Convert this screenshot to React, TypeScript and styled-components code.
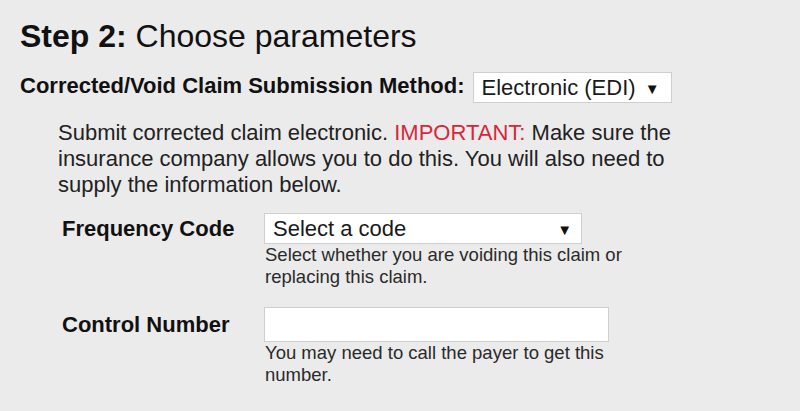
import React from "react";
import styled, { createGlobalStyle } from "styled-components";

const Global = createGlobalStyle`
  html, body { margin: 0; padding: 0; background: #ebebeb; }
  body { font-family: "Liberation Sans", Arial, sans-serif; color: #1a1a1a; }
`;

const Page = styled.div`
  width: 800px;
  height: 411px;
  box-sizing: border-box;
  padding: 18px 0 0 20px;
  background: #ebebeb;
  overflow: hidden;
`;

const Title = styled.h2`
  margin: 0;
  font-size: 32px;
  font-weight: normal;
  line-height: 36px;
  color: #111;
  b { font-weight: bold; }
`;

const MethodRow = styled.div`
  display: flex;
  align-items: center;
  gap: 8px;
  margin-top: 18px;
`;

const BoldLabel = styled.label`
  font-weight: bold;
  font-size: 22px;
  color: #111;
  padding-bottom: 3px;
`;

const SelectBox = styled.div<{ $width: number; $padRight: number }>`
  box-sizing: border-box;
  width: ${(p) => p.$width}px;
  height: 31px;
  background: #fff;
  border: 1px solid #cfcfcf;
  display: flex;
  align-items: center;
  justify-content: space-between;
  padding: 1px ${(p) => p.$padRight}px 0 8px;
  font-size: 22px;
  color: #1a1a1a;
`;

const Arrow = styled.span`
  font-size: 15px;
  line-height: 1;
  color: #111;
`;

const Indented = styled.div`
  padding-left: 38px;
  margin-top: 17px;
`;

const Para = styled.p`
  margin: 0;
  font-size: 22px;
  line-height: 26px;
  color: #222;
  width: 640px;
`;

const Important = styled.span`
  color: #d6283c;
`;

const FieldGrid = styled.div`
  display: grid;
  grid-template-columns: 202px auto;
  row-gap: 19px;
  margin-top: 15px;
  margin-left: 4px;
`;

const FieldLabel = styled.label<{ $top: number }>`
  font-weight: bold;
  font-size: 22px;
  color: #111;
  padding-top: ${(p) => p.$top}px;
`;

const FieldBody = styled.div`
  display: flex;
  flex-direction: column;
`;

const TextInput = styled.div`
  box-sizing: border-box;
  width: 345px;
  height: 35px;
  background: #fff;
  border: 1px solid #cfcfcf;
`;

const Help = styled.div<{ $width: number }>`
  font-size: 18.5px;
  line-height: 22px;
  color: #2a2a2a;
  width: ${(p) => p.$width}px;
  padding-left: 1px;
`;

export default function App() {
  return (
    <>
      <Global />
      <Page>
        <Title>
          <b>Step 2:</b> Choose parameters
        </Title>
        <MethodRow>
          <BoldLabel>Corrected/Void Claim Submission Method:</BoldLabel>
          <SelectBox $width={199} $padRight={11}>
            <span>Electronic (EDI)</span>
            <Arrow>▼</Arrow>
          </SelectBox>
        </MethodRow>
        <Indented>
          <Para>
            Submit corrected claim electronic. <Important>IMPORTANT:</Important> Make sure the
            insurance company allows you to do this. You will also need to supply the information
            below.
          </Para>
          <FieldGrid>
            <FieldLabel $top={3}>Frequency Code</FieldLabel>
            <FieldBody>
              <SelectBox $width={318} $padRight={9}>
                <span>Select a code</span>
                <Arrow>▼</Arrow>
              </SelectBox>
              <Help $width={372}>Select whether you are voiding this claim or replacing this claim.</Help>
            </FieldBody>
            <FieldLabel $top={5}>Control Number</FieldLabel>
            <FieldBody>
              <TextInput />
              <Help $width={352}>You may need to call the payer to get this number.</Help>
            </FieldBody>
          </FieldGrid>
        </Indented>
      </Page>
    </>
  );
}
